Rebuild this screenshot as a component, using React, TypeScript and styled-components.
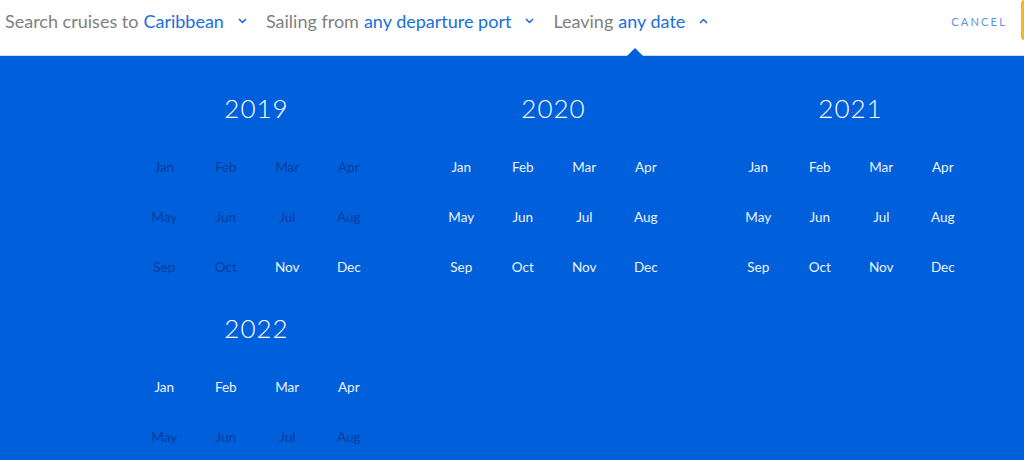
import styled, { createGlobalStyle } from "styled-components";

const GlobalStyle = createGlobalStyle`
  html, body {
    margin: 0;
    padding: 0;
    height: 100%;
    overflow: hidden;
  }
  body {
    font-family: "Lato", "Open Sans", sans-serif;
    background: #0060db;
  }
`;

type MonthState = "off" | "on";

const MONTHS = ["Jan", "Feb", "Mar", "Apr", "May", "Jun", "Jul", "Aug", "Sep", "Oct", "Nov", "Dec"];

const YEARS: { year: number; available: (i: number) => boolean }[] = [
  { year: 2019, available: (i) => i >= 10 },
  { year: 2020, available: () => true },
  { year: 2021, available: () => true },
  { year: 2022, available: (i) => i < 4 },
];

const Chevron = ({ up }: { up?: boolean }) => (
  <ChevronSvg viewBox="0 0 10 6" $up={up}>
    <path d="M1.5 1.2 L5 4.6 L8.5 1.2" fill="none" stroke="#1a6fdc" strokeWidth="1.6" strokeLinecap="round" strokeLinejoin="round" />
  </ChevronSvg>
);

const App = () => {
  return (
    <>
      <GlobalStyle />
      <Page>
        <Header>
          <Field>
            <Label>Search cruises to</Label>
            <Value>Caribbean</Value>
            <Chevron />
          </Field>
          <Field>
            <Label>Sailing from</Label>
            <Value>any departure port</Value>
            <Chevron />
          </Field>
          <Field $open>
            <Label>Leaving</Label>
            <Value>any date</Value>
            <Chevron up />
          </Field>
          <Cancel>Cancel</Cancel>
          <SearchEdge />
        </Header>
        <Panel>
          {YEARS.map(({ year, available }) => (
            <YearBlock key={year}>
              <Year>{year}</Year>
              <MonthGrid>
                {MONTHS.map((m, i) => {
                  if (year === 2022 && i >= 8) return null;
                  const state: MonthState = available(i) ? "on" : "off";
                  return (
                    <Month key={m} $state={state}>
                      {m}
                    </Month>
                  );
                })}
              </MonthGrid>
            </YearBlock>
          ))}
        </Panel>
      </Page>
    </>
  );
};

const Page = styled.div`
  display: flex;
  flex-direction: column;
  height: 100vh;
  overflow: hidden;
`;

const Header = styled.header`
  flex-shrink: 0;
  display: flex;
  align-items: stretch;
  height: 56px;
  padding-left: 5px;
  background: #fff;
  border-bottom: 1px solid #c9dcf5;
  box-sizing: border-box;
  position: relative;
  z-index: 1;
`;

const Field = styled.div<{ $open?: boolean }>`
  display: flex;
  align-items: center;
  padding-bottom: 13px;
  margin-right: 19px;
  font-size: 18px;
  position: relative;
  white-space: nowrap;

  &::after {
    content: "";
    display: ${(p) => (p.$open ? "block" : "none")};
    position: absolute;
    left: 50%;
    bottom: -1px;
    margin-left: -4px;
    border-left: 8px solid transparent;
    border-right: 8px solid transparent;
    border-bottom: 8px solid #0060db;
  }
`;

const Label = styled.span`
  color: #808080;
  margin-right: 5px;
`;

const Value = styled.span`
  color: #1a6fdc;
`;

const ChevronSvg = styled.svg<{ $up?: boolean }>`
  width: 9px;
  height: 6px;
  margin-left: 14px;
  transform: ${(p) => (p.$up ? "rotate(180deg)" : "none")};
`;

const Cancel = styled.button`
  align-self: flex-start;
  height: 42px;
  margin-left: auto;
  margin-right: 14px;
  padding: 0;
  border: 0;
  background: none;
  font-family: inherit;
  font-size: 11px;
  letter-spacing: 2.2px;
  text-transform: uppercase;
  color: #5b93e3;
  cursor: pointer;
`;

const SearchEdge = styled.div`
  align-self: flex-start;
  width: 3px;
  height: 40px;
  background: #f5b62a;
  border-radius: 3px 0 0 3px;
`;

const Panel = styled.main`
  flex: 1;
  display: grid;
  grid-template-columns: repeat(3, 297px);
  align-content: start;
  padding: 32px 0 0 108px;
  background: #0060db;
`;

const YearBlock = styled.section`
  display: flex;
  flex-direction: column;
  align-items: center;
  height: 220px;
`;

const Year = styled.h2`
  margin: 0;
  height: 40px;
  line-height: 40px;
  font-size: 26px;
  font-weight: 300;
  letter-spacing: 1px;
  color: #fff;
`;

const MonthGrid = styled.div`
  display: grid;
  grid-template-columns: repeat(4, 61.5px);
  grid-auto-rows: 50px;
  margin-top: 14px;
`;

const Month = styled.span<{ $state: MonthState }>`
  display: flex;
  align-items: center;
  justify-content: center;
  font-size: 13.5px;
  color: ${(p) => (p.$state === "on" ? "#eef3fc" : "#073c9a")};
  cursor: ${(p) => (p.$state === "on" ? "pointer" : "default")};
`;

export default App;
